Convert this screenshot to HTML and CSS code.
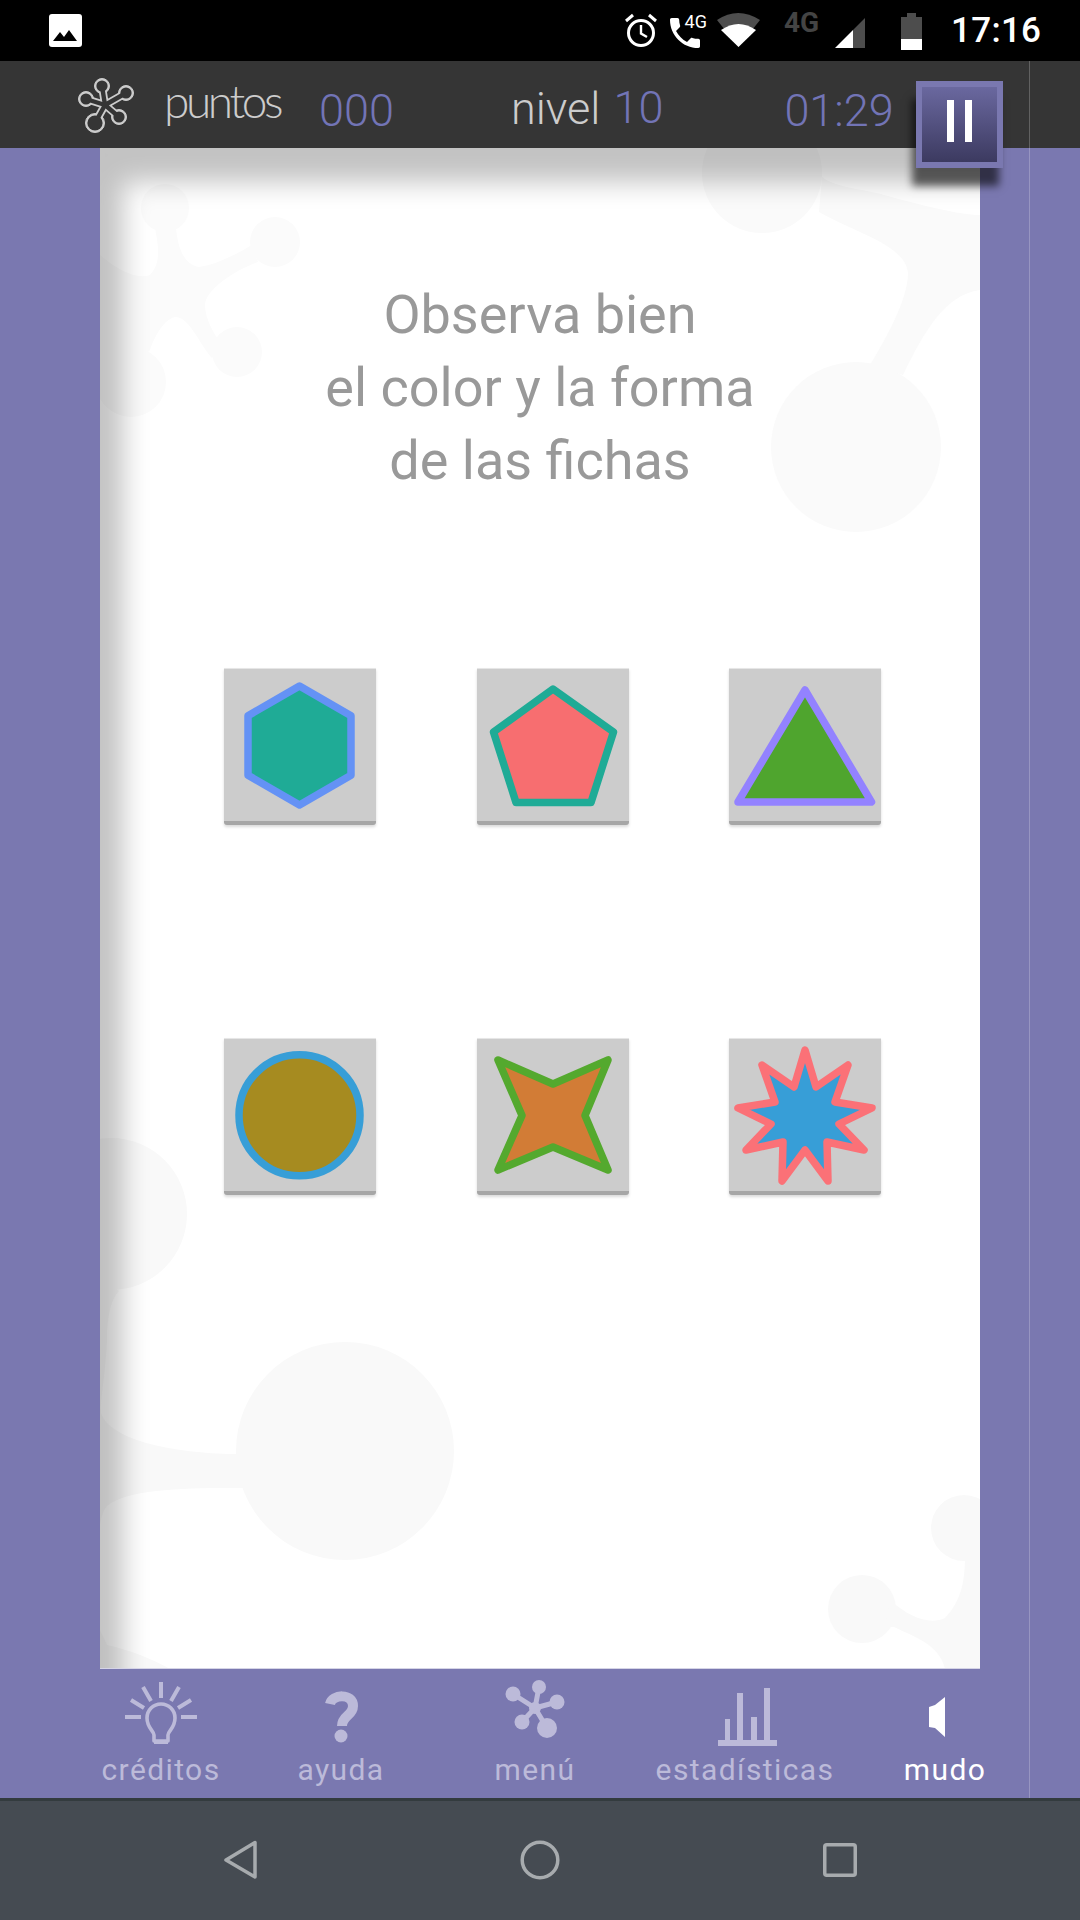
FILE: index.html
```html
<!DOCTYPE html>
<html lang="es">

<head>
  <meta charset="UTF-8">
  <title>Puntos</title>
  <link rel="stylesheet" href="styles.css">
</head>

<body>
  <!-- status bar -->
  <div class="status-bar">
    <svg class="st-image" viewBox="0 0 33 33">
      <rect width="33" height="33" rx="3" fill="#fff" />
      <path d="M4 27 L11 18 L15 23 L20 16 L28 27 Z" fill="#000" />
    </svg>
    <svg class="st-alarm" viewBox="0 0 34 34" fill="none" stroke="#fff">
      <circle cx="17" cy="20" r="12.5" stroke-width="3" />
      <path d="M17 12 V20.5 L23 24" stroke-width="2.4" />
      <path d="M2 8 L9 2 M32 8 L25 2" stroke-width="3" />
    </svg>
    <div class="st-call">
      <svg viewBox="3 3 18 18">
        <path fill="#fff" d="M6.62 10.79c1.44 2.83 3.76 5.14 6.59 6.59l2.2-2.2c.27-.27.67-.36 1.02-.24 1.12.37 2.33.57 3.57.57.55 0 1 .45 1 1V20c0 .55-.45 1-1 1-9.39 0-17-7.61-17-17 0-.55.45-1 1-1h3.5c.55 0 1 .45 1 1 0 1.25.2 2.45.57 3.57.11.35.03.74-.25 1.02l-2.2 2.2z" />
      </svg>
      <span class="st-call-label">4G</span>
    </div>
    <svg class="st-wifi" viewBox="0 0 43 34">
      <path fill="#4d4d4d" d="M0 7 Q21 -7 43 7 L21.5 34 Z" />
      <path fill="#fff" d="M4 17 Q21.5 5 39 17 L21.5 34 Z" />
    </svg>
    <span class="st-net">4G</span>
    <svg class="st-signal" viewBox="0 0 30 30">
      <path fill="#4d4d4d" d="M30 0 V30 H18 V12 Z" />
      <path fill="#fff" d="M18 12 V30 H0 Z" />
    </svg>
    <svg class="st-battery" viewBox="0 0 21 37">
      <path fill="#4d4d4d" d="M6 0 H15 V4 H21 V26 H0 V4 H6 Z" />
      <rect y="26" width="21" height="11" fill="#fff" />
    </svg>
    <span class="st-time">17:16</span>
  </div>

  <!-- score bar -->
  <header class="top-bar">
    <svg class="logo" viewBox="78 78 58 56">
      <g stroke="#ccc" fill="#ccc">
        <path d="M105 105 L102 86 M105 105 L126 93 M105 105 L86 99 M105 105 L95 123 M105 105 L119 117" stroke-width="8" fill="none" />
        <circle cx="102" cy="86" r="7.5" />
        <circle cx="126" cy="93" r="7.5" />
        <circle cx="86" cy="99" r="7.5" />
        <circle cx="95" cy="123" r="9.5" />
        <circle cx="119" cy="117" r="7.5" />
      </g>
      <g stroke="#353535" fill="#353535">
        <path d="M105 105 L102 86 M105 105 L126 93 M105 105 L86 99 M105 105 L95 123 M105 105 L119 117" stroke-width="4.4" fill="none" />
        <circle cx="102" cy="86" r="5.6" stroke="none" />
        <circle cx="126" cy="93" r="5.6" stroke="none" />
        <circle cx="86" cy="99" r="5.6" stroke="none" />
        <circle cx="95" cy="123" r="7.6" stroke="none" />
        <circle cx="119" cy="117" r="5.6" stroke="none" />
      </g>
    </svg>
    <span class="points-label">puntos</span>
    <span class="points-value">000</span>
    <span class="level-label">nivel</span>
    <span class="level-value">10</span>
    <span class="timer">01:29</span>
  </header>

  <button class="pause" type="button"><span></span><span></span></button>
  <div class="edge-line"></div>

  <main class="stage">
    <section class="panel">
      <svg class="watermark" viewBox="100 148 880 1521">
        <!-- top left -->
        <g fill="#fbfbfb">
          <circle cx="165" cy="208" r="24" />
          <circle cx="275" cy="242" r="25" />
          <circle cx="237" cy="352" r="25" />
          <circle cx="131" cy="382" r="35" />
          <circle cx="105" cy="315" r="32" />
          <path d="M155 228 L176 228 C178 250 185 265 199 267 C215 265 235 255 252 245 L258 262 C235 270 205 290 205 305 C205 320 215 335 222 345 L212 358 C200 345 190 318 176 317 C165 318 155 335 150 350 L100 400 L100 255 C115 268 135 280 150 275 C162 262 158 245 155 228 Z" />
        </g>

        <!-- top right -->
        <g fill="#fafafa">
          <circle cx="762" cy="173" r="60" />
          <circle cx="856" cy="447" r="85" />
          <path d="M822 177 C835 188 870 190 884 195 C920 205 960 215 980 215 L980 290 C945 295 925 330 903 375 L870 365 C885 340 908 300 908 273 C905 245 860 235 819 212 Z" />
        </g>

        <g fill="#f9f9f9">
          <!-- bottom left -->
          <circle cx="111" cy="1214" r="76" />
          <circle cx="345" cy="1451" r="109" />
          <path d="M100 1280 L119 1291 C110 1300 107 1320 107 1340 C105 1380 100 1400 101 1413 C110 1440 170 1452 228 1454 L245 1454 L245 1488 L230 1488 C180 1488 125 1490 107 1506 C102 1512 101 1520 100 1525 L100 1630 L107 1645 C130 1650 155 1660 170 1669 L100 1669 Z" />

          <!-- bottom right -->
          <circle cx="862" cy="1609" r="34" />
          <circle cx="964" cy="1528" r="33" />
          <path d="M965 1555 C965 1580 962 1600 945 1618 C930 1625 910 1618 890 1600 L885 1627 L894 1627 C915 1637 940 1645 945 1669 L980 1669 L980 1555 Z" />
        </g>
      </svg>
      <div class="panel-shade"></div>

      <h1 class="title">Observa bien<br>el color y la forma<br>de las fichas</h1>

      <div class="cards">
        <div class="card">
          <svg viewBox="0 0 152 152">
            <polygon points="75.5,18 127,47.7 127,107.3 75.5,137 24,107.3 24,47.7" fill="#1fab96" stroke="#6492f5" />
          </svg>
        </div>
        <div class="card">
          <svg viewBox="0 0 152 152">
            <polygon points="76,21 136.5,64 114,134.5 39,134.5 16.5,64" fill="#f76e70" stroke="#1fab96" />
          </svg>
        </div>
        <div class="card">
          <svg viewBox="0 0 152 152">
            <polygon points="76,22 142.5,134 9,134" fill="#4fa52e" stroke="#9382ff" />
          </svg>
        </div>
        <div class="card">
          <svg viewBox="0 0 152 152">
            <circle cx="75.5" cy="77.3" r="60.5" fill="#a68b20" stroke="#379ed7" />
          </svg>
        </div>
        <div class="card">
          <svg viewBox="0 0 152 152">
            <polygon points="21,22 76,46 131,22 108,77.5 131,132 76,109 21,132 45,77.5" fill="#d27c36" stroke="#54a92e" />
          </svg>
        </div>
        <div class="card">
          <svg viewBox="0 0 152 152">
            <polygon points="76,12 87,49 119,27 106,64 143,70 110,86 135,112 98,104 99,143 76,112 53,143 54,104 17,112 42,86 9,70 46,64 33,27 65,49" fill="#379ed7" stroke="#fb7177" />
          </svg>
        </div>
      </div>
    </section>
  </main>

  <nav class="bottom-nav">
    <div class="nav-item">
      <svg viewBox="-40 0 80 66" fill="none" stroke="currentColor">
        <path d="M-7 61 V55 C-7 51 -14 48 -14 38 A14 14 0 0 1 14 38 C14 48 7 51 7 55 V61 Z" stroke-width="3.6" stroke-linejoin="round" />
        <path d="M-7 62 H7" stroke-width="4" />
        <path d="M-36 37 H-20 M36 37 H20 M0 2 V18 M-18 7 L-10 21 M18 7 L10 21 M-30 20 L-17 28 M30 20 L17 28" stroke-width="4" />
      </svg>
      <span>créditos</span>
    </div>
    <div class="nav-item">
      <svg viewBox="-40 0 80 66" fill="none" stroke="currentColor">
        <path d="M-11 24 C-9 14 12 13 12 26 C12 36 1 35 1 46" stroke-width="10" />
        <circle cx="0" cy="56" r="6.5" fill="currentColor" stroke="none" />
      </svg>
      <span>ayuda</span>
    </div>
    <div class="nav-item">
      <svg viewBox="-40 0 80 66" fill="currentColor" stroke="currentColor">
        <path d="M0 28 L4 7 M0 28 L-22 14 M0 28 L22 22 M0 28 L-13 42 M0 28 L12 48" stroke-width="5" fill="none" />
        <circle cx="4" cy="7" r="7" stroke="none" />
        <circle cx="-22" cy="14" r="7.5" stroke="none" />
        <circle cx="22" cy="22" r="7.5" stroke="none" />
        <circle cx="-13" cy="42" r="7.5" stroke="none" />
        <circle cx="12" cy="48" r="10" stroke="none" />
        <circle cx="0" cy="28" r="6" stroke="none" />
      </svg>
      <span>menú</span>
    </div>
    <div class="nav-item">
      <svg viewBox="-40 0 80 66" fill="currentColor">
        <rect x="-27" y="60" width="59" height="6" />
        <rect x="-20" y="39" width="5" height="22" />
        <rect x="-8" y="13" width="6" height="48" />
        <rect x="6" y="37" width="6" height="24" />
        <rect x="19" y="8" width="6" height="53" />
      </svg>
      <span>estadísticas</span>
    </div>
    <div class="nav-item active">
      <svg viewBox="-40 0 80 66" fill="currentColor">
        <polygon points="-16,27 -10,25 0,17 0,57 -10,48 -16,47" />
      </svg>
      <span>mudo</span>
    </div>
  </nav>

  <!-- android buttons -->
  <footer class="system-nav">
    <svg viewBox="0 0 40 40" fill="none" stroke="#a7abae" stroke-width="3.5">
      <path d="M35 2.5 V37 L6 20 Z" stroke-linejoin="round" />
    </svg>
    <svg viewBox="0 0 40 40" fill="none" stroke="#a7abae" stroke-width="3.5">
      <circle cx="20" cy="20" r="17.8" />
    </svg>
    <svg viewBox="0 0 40 40" fill="none" stroke="#a7abae" stroke-width="3.5">
      <rect x="4.75" y="4.75" width="30.5" height="30.5" rx="2" />
    </svg>
  </footer>
</body>

</html>
```

FILE: styles.css
```css
* {
  box-sizing: border-box;
}

body {
  position: relative;
  display: flex;
  flex-direction: column;
  width: 1080px;
  height: 1920px;
  margin: 0;
  overflow: hidden;
  background-color: #7a78b0;
  font-family: Roboto, "Liberation Sans", sans-serif;
}

/* status bar */
.status-bar {
  display: flex;
  align-items: flex-start;
  height: 61px;
  padding: 13px 0 0 49px;
  background-color: #000;
}

.st-image {
  width: 33px;
  height: 33px;
  margin-top: 1px;
}

.st-alarm {
  width: 34px;
  height: 34px;
  margin-left: 542px;
}

.st-call {
  position: relative;
  width: 37px;
  height: 34px;
  margin-left: 12px;
}

.st-call svg {
  display: block;
  width: 30px;
  height: 30px;
  margin-top: 5px;
}

.st-call-label {
  position: absolute;
  top: -1px;
  right: 0;
  color: #fff;
  font-size: 18px;
  line-height: 20px;
}

.st-wifi {
  width: 43px;
  height: 34px;
  margin-left: 10px;
}

.st-net {
  width: 37px;
  margin-left: 24px;
  margin-top: -4px;
  color: #444;
  font-size: 28px;
  font-weight: 700;
  line-height: 28px;
}

.st-signal {
  width: 30px;
  height: 30px;
  margin-left: 14px;
  margin-top: 5px;
}

.st-battery {
  width: 21px;
  height: 37px;
  margin-left: 36px;
}

.st-time {
  margin-left: 29px;
  color: #fff;
  font-size: 35px;
  font-weight: 500;
  line-height: 36px;
  letter-spacing: 0.3px;
}

/* score bar */
.top-bar {
  display: flex;
  align-items: flex-start;
  height: 87px;
  padding: 17px 0 0 78px;
  background-color: #353535;
  color: #ccc;
}

.logo {
  width: 58px;
  height: 56px;
}

.points-label {
  width: 115px;
  margin-left: 28px;
  margin-top: -1px;
  font-family: Lato, sans-serif;
  font-size: 46px;
  font-weight: 300;
  line-height: 48px;
  letter-spacing: -3.4px;
}

.points-value,
.level-label,
.level-value,
.timer {
  font-size: 45px;
  font-weight: 300;
  line-height: 50px;
}

.points-value,
.level-value,
.timer {
  color: #7274b6;
}

.points-value {
  margin-left: 40px;
  margin-top: 8px;
}

.level-label {
  margin-left: 117px;
  margin-top: 6px;
}

.level-value {
  margin-left: 13px;
  margin-top: 5px;
}

.timer {
  margin-left: 121px;
  margin-top: 8px;
}

.pause {
  position: absolute;
  top: 81px;
  left: 916px;
  display: flex;
  justify-content: center;
  gap: 11px;
  width: 87px;
  height: 87px;
  padding: 13px 0 0;
  border: 6px solid #7a78b0;
  background: linear-gradient(#6a689f, #3c3a60);
  box-shadow: -4px 18px 8px rgba(0, 0, 0, 0.6);
  z-index: 2;
}

.pause span {
  width: 7px;
  height: 42px;
  background-color: #fff;
}

.edge-line {
  position: absolute;
  top: 61px;
  left: 1029px;
  width: 1px;
  height: 1737px;
  background-color: rgba(255, 255, 255, 0.22);
  z-index: 1;
}

/* game panel */
.stage {
  flex: 1;
  padding-left: 100px;
}

.panel {
  position: relative;
  width: 880px;
  height: 100%;
  border-bottom: 1px solid #d5d4e6;
  background-color: #fff;
  overflow: hidden;
}

.watermark {
  position: absolute;
  top: 0;
  left: 0;
  width: 880px;
  height: 1521px;
}

/* runs past the panel so the shadow doesn't fade at the far corners */
.panel-shade {
  position: absolute;
  top: 0;
  left: 0;
  width: calc(100% + 60px);
  height: calc(100% + 60px);
  box-shadow: inset 23px 34px 27px rgba(0, 0, 0, 0.24);
}

.title {
  position: relative;
  margin: 0;
  padding-top: 130px;
  color: #999;
  font-size: 54px;
  font-weight: 400;
  line-height: 73px;
  text-align: center;
}

.cards {
  position: relative;
  display: grid;
  grid-template-columns: repeat(3, 152px);
  grid-auto-rows: 157px;
  column-gap: 100.5px;
  row-gap: 213px;
  margin-top: 171px;
  padding-left: 124px;
}

.card {
  border-top: 1px solid #e6e6e6;
  border-bottom: 4px solid #a6a6a6;
  border-radius: 0 0 3px 3px;
  background-color: #ccc;
  box-shadow: 0 2px 3px rgba(0, 0, 0, 0.15);
}

.card svg {
  display: block;
  width: 152px;
  height: 152px;
  margin-top: -1px;
  overflow: visible;
}

.card polygon,
.card circle {
  stroke-width: 7.5;
  stroke-linejoin: round;
}

/* bottom menu */
.bottom-nav {
  display: grid;
  grid-template-columns: 180px 180px 208px 212px 188px;
  height: 129px;
  padding: 11px 0 0 71px;
  color: #bcbad9;
}

.nav-item {
  display: flex;
  flex-direction: column;
  align-items: center;
}

.nav-item svg {
  width: 80px;
  height: 66px;
}

.nav-item span {
  margin-top: 6px;
  font-size: 30px;
  line-height: 36px;
  letter-spacing: 1.4px;
}

.nav-item.active {
  color: #fff;
}

/* android buttons */
.system-nav {
  display: grid;
  grid-template-columns: repeat(3, 300px);
  justify-items: center;
  align-items: center;
  height: 122px;
  padding: 0 90px 2px;
  border-top: 3px solid #333b3e;
  background-color: #454b52;
}

.system-nav svg {
  width: 40px;
  height: 40px;
}
```
